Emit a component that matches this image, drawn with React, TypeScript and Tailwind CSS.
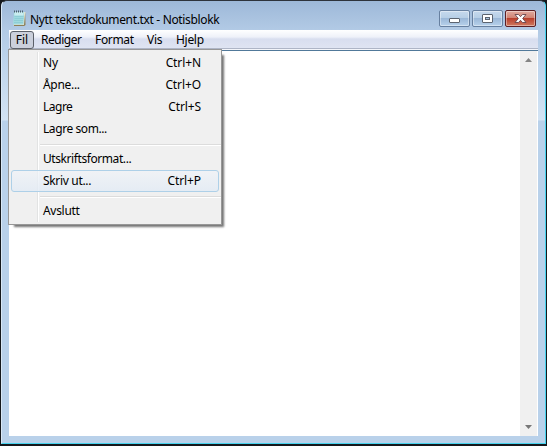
type Entry = { label: string; keys?: string; active?: boolean; track: string } | null;

const entries: Entry[] = [
  { label: "Ny", keys: "Ctrl+N", track: "tracking-[-0.2px]" },
  { label: "Åpne...", keys: "Ctrl+O", track: "tracking-[-0.3px]" },
  { label: "Lagre", keys: "Ctrl+S", track: "tracking-[-0.5px]" },
  { label: "Lagre som...", track: "tracking-[-0.42px]" },
  null,
  { label: "Utskriftsformat...", track: "tracking-[-0.42px]" },
  { label: "Skriv ut...", keys: "Ctrl+P", active: true, track: "tracking-[-0.32px]" },
  null,
  { label: "Avslutt", track: "tracking-[-0.3px]" },
];

function NotepadIcon() {
  return (
    <svg width="16" height="17" viewBox="0 0 16 17" className="shrink-0">
      <path d="M2.500 2h11l-1 13.500H1.500z" fill="#e6e5cf" />
      <path d="M13.200 2l.3 13-1.300 1H2v-1h10z" fill="#8d8058" />
      <path d="M2 2h10.200l-.7 12.500H1z" fill="#9fd9df" />
      <path d="M2.500 2h9v3.500H2.300z" fill="#c9edf0" />
      <path d="M2.500 6.500h9M2.500 8.500h9M2 10.500h9M2 12.500h9" stroke="#86c8d2" strokeWidth=".7" />
      <path d="M2.500 .5v2M4.500 .5v2M6.500 .5v2M8.500 .5v2M10.500 .5v2" stroke="#4a626b" />
    </svg>
  );
}

function CaptionButton({ kind }: { kind: "min" | "max" | "close" }) {
  const tone =
    kind === "close"
      ? "border-[#5c1f24] bg-[linear-gradient(to_bottom,#e0aa9f_0%,#d18373_46%,#b9402d_50%,#d07a60_100%)]"
      : "border-[#6780a0] bg-[linear-gradient(to_bottom,#c6d9ed_0%,#b6cee6_46%,#9bb8d8_50%,#b7d1eb_100%)]";
  return (
    <div className={`flex h-[17px] w-[31px] items-center justify-center rounded-[2px] border shadow-[inset_0_0_0_1px_rgba(255,255,255,0.4)] ${tone}`}>
      <svg width="15" height="13" viewBox="0 0 15 13">
        {kind === "min" && <rect x="2.500" y="6.500" width="10" height="4" rx=".5" fill="#fff" stroke="#5c6470" />}
        {kind === "max" && (
          <>
            <rect x="2.500" y="2.500" width="10" height="8" rx=".5" fill="#fff" stroke="#5c6470" />
            <rect x="5.500" y="5.500" width="4" height="2" fill="#a9c3df" stroke="#5c6470" />
          </>
        )}
        {kind === "close" && (
          <path d="M2 2.500h3.500l2 2.200 2-2.200H13L9.700 6.500l3.300 4H9.500l-2-2.200-2 2.200H2l3.300-4z" fill="#fff" stroke="#65454d" strokeWidth=".9" />
        )}
      </svg>
    </div>
  );
}

function Menu() {
  return (
    <div className="absolute top-[49px] left-2 w-[214px] border border-[#979797] bg-[#f0f0f0] p-[2px] shadow-[4px_4px_2px_-2px_rgba(0,0,0,0.55)]">
      <div className="absolute inset-y-[2px] left-[28px] w-[2px] border-r border-l border-r-white border-l-[#e2e3e3]" />
      {entries.map((e, i) =>
        e ? (
          <div
            key={i}
            className={`relative flex h-[22px] items-center justify-between rounded-[3px] border pr-[17px] pl-[31px] ${
              e.active ? "border-[#aed0e8] bg-linear-to-b from-[#f0f3f8]/70 to-[#e2ebf5]/80" : "border-transparent"
            }`}
          >
            <span className={e.track}>{e.label}</span>
            <span className="tracking-[-0.1px]">{e.keys}</span>
          </div>
        ) : (
          <div key={i} className="-mr-[2px] h-2 pt-1 pl-[29px]">
            <div className="h-[2px] w-full border-t border-b border-t-[#dcdcdc] border-b-white" />
          </div>
        ),
      )}
    </div>
  );
}

export default function App() {
  return (
    <div className="relative h-[446px] w-[547px] overflow-hidden bg-[#15181c] font-['Noto_Sans','Open_Sans',sans-serif] text-[12px] leading-[16px] text-black">
      <div className="ml-px flex h-[444px] w-[545px] flex-col rounded-t-[6px] border border-t-[#2d333b] border-r-[#45d3ee] border-b-[#45d3ee] border-l-[#d9e8f6] bg-[#b9d1ea] bg-[linear-gradient(to_bottom,#9db8d8_0px,#b2cae5_29px,#bdd4ec_60px,#d3e3f3_119px,#b9d1ea_120px)] px-[7px] pb-[7px]">
        <header className="flex h-[29px] shrink-0 items-center">
          <div className="mt-[6px] ml-[3px]"><NotepadIcon /></div>
          <h1 className="mt-[8px] ml-[2px] tracking-[-0.34px] whitespace-nowrap">Nytt tekstdokument.txt - Notisblokk</h1>
          <div className="mt-[6px] mr-[2px] ml-auto flex gap-[2px]">
            <CaptionButton kind="min" />
            <CaptionButton kind="max" />
            <CaptionButton kind="close" />
          </div>
        </header>
        <nav className="flex h-[20px] shrink-0 items-center border-b border-[#f3f5fa] bg-[linear-gradient(to_bottom,#ffffff_0px,#eef1f9_7px,#d8deef_9px,#dfe4f2_18px,#aeb5c6_18px,#aeb5c6_19px)]">
          <div className="ml-px flex h-[18px] w-[24px] items-center justify-center rounded-[3px] border border-[#5b6069] bg-[#cbd0dc]">Fil</div>
          <span className="ml-[7px] w-[54px] tracking-[-0.48px]">Rediger</span>
          <span className="w-[52px] tracking-[-0.35px]">Format</span>
          <span className="w-[29px] tracking-[-0.3px]">Vis</span>
          <span className="tracking-[-0.3px]">Hjelp</span>
        </nav>
        <main className="flex min-h-0 flex-1 border-t border-[#51799a] bg-white">
          <div className="flex-1" />
          <div className="mr-px flex w-[17px] flex-col items-center justify-between bg-[#f0f0f0] py-[7px]">
            <svg width="7" height="4"><path d="M0 4L3.500 0 7 4z" fill="#858585" /></svg>
            <svg width="7" height="4"><path d="M0 0L3.500 4 7 0z" fill="#777" /></svg>
          </div>
        </main>
      </div>
      <Menu />
    </div>
  );
}
